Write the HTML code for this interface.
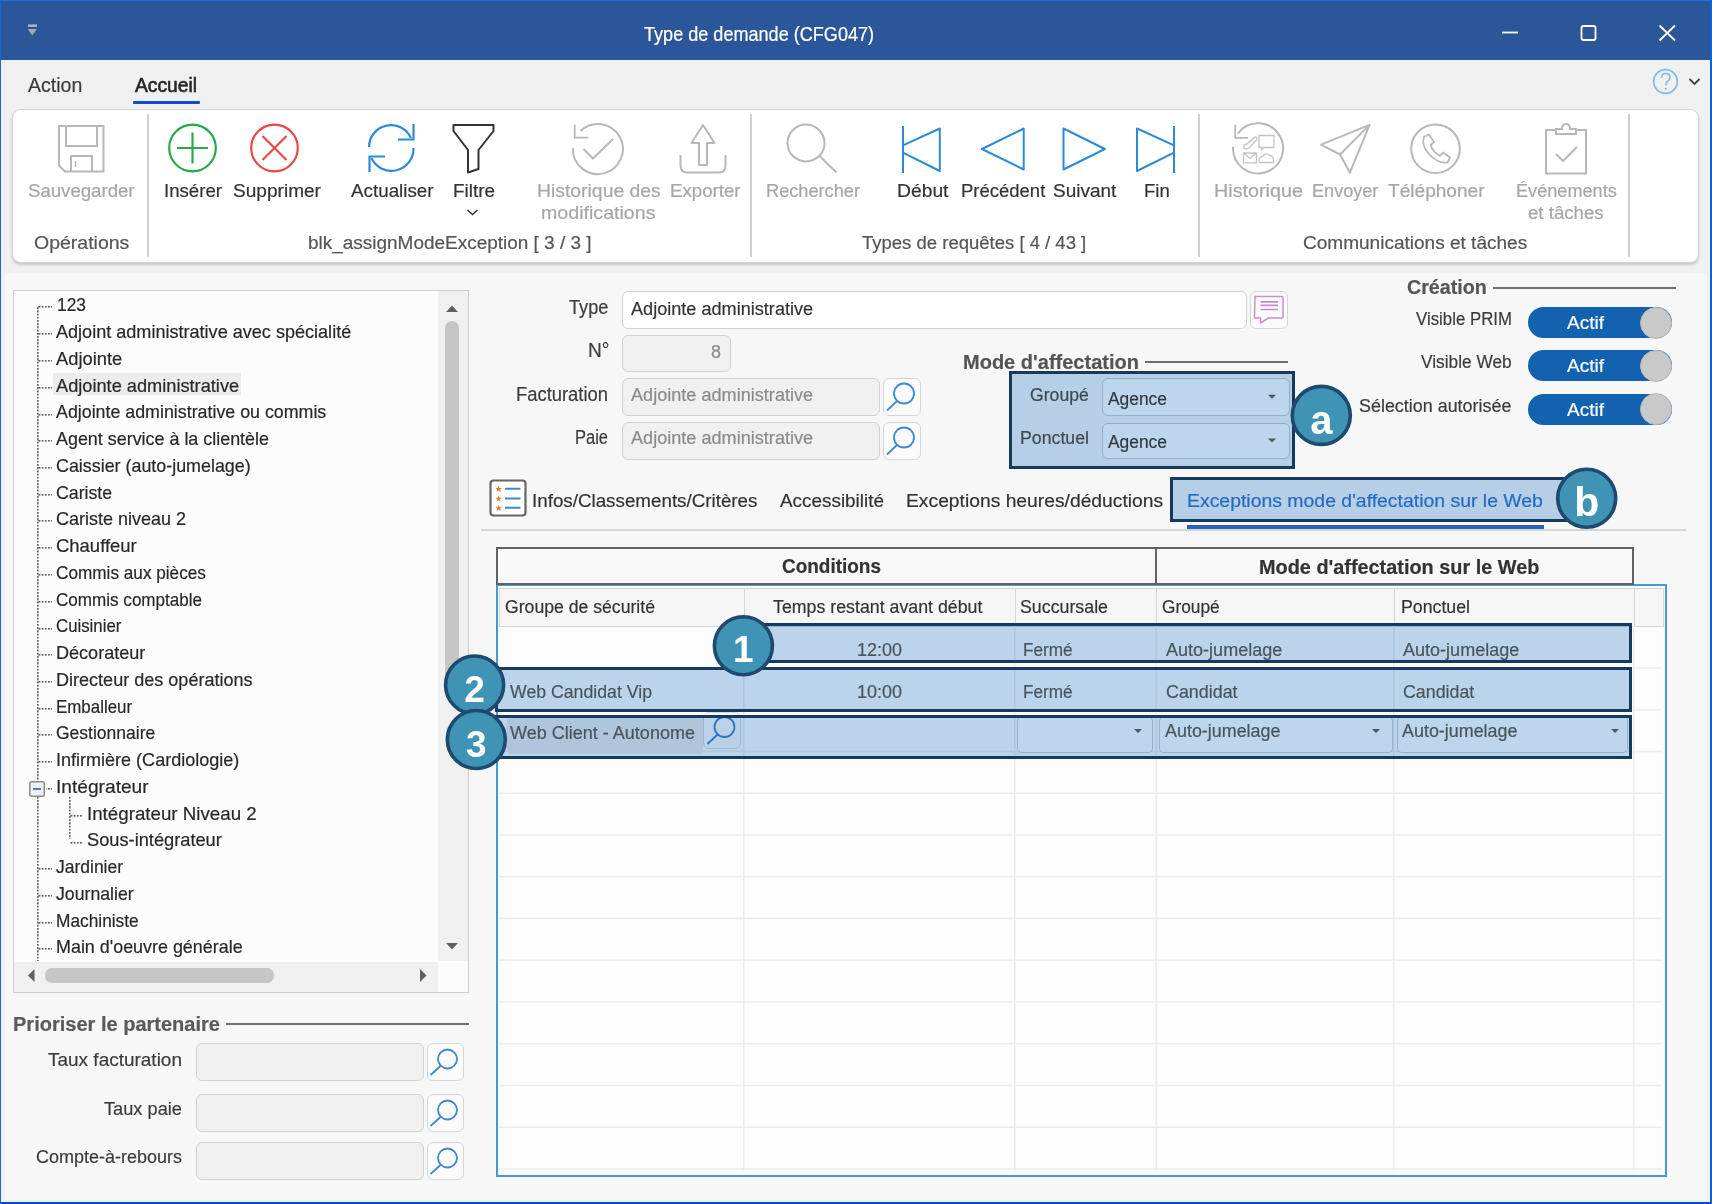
<!DOCTYPE html>
<html><head><meta charset="utf-8"><title>Type de demande (CFG047)</title>
<style>
html,body{margin:0;padding:0;}
body{width:1712px;height:1204px;position:relative;overflow:hidden;background:#f7f7f7;font-family:"Liberation Sans", sans-serif;}
.t{position:absolute;white-space:pre;line-height:1;transform-origin:0 0;-webkit-text-stroke:0.2px currentColor;}
.b{position:absolute;box-sizing:border-box;}
svg.ov{position:absolute;left:0;top:0;}
</style></head><body>
<div class="b" style="left:0px;top:0px;width:1712px;height:1204px;background:#f0f0f0;"></div>
<div class="b" style="left:5px;top:273px;width:1702px;height:926.5px;background:#f7f7f7;"></div>
<div class="b" style="left:0px;top:0px;width:1712px;height:60px;background:#2b579a;"></div>
<div class="b" style="left:0px;top:60px;width:1712px;height:213px;background:#f0f0f0;"></div>
<svg class="ov" width="1712" height="60" style="left:0;top:0"><rect x="28" y="24.5" width="9" height="2.3" fill="#b9b9b9"/><path d="M27.8 29 L36.8 29 L32.3 35.5 Z" fill="#a9a9a9"/><line x1="1502" y1="32.5" x2="1518" y2="32.5" stroke="#fff" stroke-width="1.8"/><rect x="1581.5" y="26" width="14" height="14" rx="2" fill="none" stroke="#fff" stroke-width="1.8"/><path d="M1659.5 25.5 L1675 40.5 M1675 25.5 L1659.5 40.5" stroke="#fff" stroke-width="1.8"/></svg>
<span class="t" style="left:643.70px;top:24.20px;font-size:20.20px;color:#ffffff;transform:scaleX(0.8955);">Type de demande (CFG047)</span>
<span class="t" style="left:28.00px;top:76.39px;font-size:19.62px;color:#3a3a3a;transform:scaleX(0.9957);">Action</span>
<span class="t" style="left:134.50px;top:76.39px;font-size:19.62px;color:#262626;transform:scaleX(0.9801);-webkit-text-stroke:0.6px #262626;">Accueil</span>
<div class="b" style="left:133px;top:101px;width:67px;height:3px;background:#0b50c8;border-radius:1px;"></div>
<svg class="ov" width="1712" height="110"><circle cx="1665.5" cy="81.5" r="11.8" fill="none" stroke="#7fbde6" stroke-width="1.8"/><path d="M1661.5 78 Q1661.5 73.5 1665.7 73.5 Q1670 73.5 1670 77.5 Q1670 80 1667.5 81.5 Q1665.8 82.5 1665.8 85.5" fill="none" stroke="#7fbde6" stroke-width="1.7"/><circle cx="1665.8" cy="88.8" r="1.1" fill="#7fbde6"/><path d="M1689.5 79 L1694.5 84 L1699.5 79" fill="none" stroke="#444" stroke-width="1.8"/></svg>
<div class="b" style="left:12px;top:109px;width:1687px;height:154px;background:#fff;border:1px solid #d6d6d6;border-radius:9px;box-shadow:0 2px 3px rgba(0,0,0,0.18);"></div>
<div class="b" style="left:146.5px;top:114px;width:2.0px;height:143px;background:#d0d0d0;"></div>
<div class="b" style="left:749.5px;top:114px;width:2.0px;height:143px;background:#d0d0d0;"></div>
<div class="b" style="left:1198px;top:114px;width:2px;height:143px;background:#d0d0d0;"></div>
<div class="b" style="left:1628px;top:114px;width:2px;height:143px;background:#d0d0d0;"></div>
<span class="t" style="left:28.00px;top:182.01px;font-size:18.90px;color:#a6a6a6;transform:scaleX(0.9852);">Sauvegarder</span>
<span class="t" style="left:33.60px;top:234.01px;font-size:18.90px;color:#555555;transform:scaleX(1.0321);">Opérations</span>
<span class="t" style="left:163.50px;top:182.01px;font-size:18.90px;color:#333333;transform:scaleX(0.9862);">Insérer</span>
<span class="t" style="left:232.70px;top:182.01px;font-size:18.90px;color:#333333;transform:scaleX(1.0096);">Supprimer</span>
<span class="t" style="left:351.00px;top:182.01px;font-size:18.90px;color:#333333;transform:scaleX(0.9956);">Actualiser</span>
<span class="t" style="left:453.00px;top:182.01px;font-size:18.90px;color:#333333;">Filtre</span>
<span class="t" style="left:536.70px;top:182.01px;font-size:18.90px;color:#a6a6a6;transform:scaleX(1.0250);">Historique des</span>
<span class="t" style="left:540.50px;top:204.01px;font-size:18.90px;color:#a6a6a6;transform:scaleX(1.0383);">modifications</span>
<span class="t" style="left:669.60px;top:182.01px;font-size:18.90px;color:#a6a6a6;transform:scaleX(0.9886);">Exporter</span>
<span class="t" style="left:308.40px;top:234.01px;font-size:18.90px;color:#555555;transform:scaleX(1.0037);">blk_assignModeException [ 3 / 3 ]</span>
<span class="t" style="left:766.00px;top:182.01px;font-size:18.90px;color:#a6a6a6;transform:scaleX(0.9624);">Rechercher</span>
<span class="t" style="left:896.50px;top:182.01px;font-size:18.90px;color:#333333;transform:scaleX(1.0213);">Début</span>
<span class="t" style="left:961.40px;top:182.01px;font-size:18.90px;color:#333333;transform:scaleX(0.9787);">Précédent</span>
<span class="t" style="left:1053.00px;top:182.01px;font-size:18.90px;color:#333333;transform:scaleX(1.0044);">Suivant</span>
<span class="t" style="left:1143.60px;top:182.01px;font-size:18.90px;color:#333333;transform:scaleX(0.9829);">Fin</span>
<span class="t" style="left:862.40px;top:234.01px;font-size:18.90px;color:#555555;transform:scaleX(0.9795);">Types de requêtes [ 4 / 43 ]</span>
<span class="t" style="left:1213.80px;top:182.01px;font-size:18.90px;color:#a6a6a6;transform:scaleX(1.0462);">Historique</span>
<span class="t" style="left:1312.00px;top:182.01px;font-size:18.90px;color:#a6a6a6;transform:scaleX(0.9579);">Envoyer</span>
<span class="t" style="left:1387.60px;top:182.01px;font-size:18.90px;color:#a6a6a6;transform:scaleX(1.0105);">Téléphoner</span>
<span class="t" style="left:1516.00px;top:182.01px;font-size:18.90px;color:#a6a6a6;transform:scaleX(0.9597);">Événements</span>
<span class="t" style="left:1528.40px;top:204.01px;font-size:18.90px;color:#a6a6a6;transform:scaleX(0.9859);">et tâches</span>
<span class="t" style="left:1302.80px;top:234.01px;font-size:18.90px;color:#555555;transform:scaleX(1.0070);">Communications et tâches</span>
<svg class="ov" width="1712" height="270"><path d="M59 126 H103.5 V171.5 H65 L59 165.5 Z" fill="none" stroke="#b8b8b8" stroke-width="2"/><path d="M66 126 V146 H97 V126" fill="none" stroke="#b8b8b8" stroke-width="2"/><path d="M71 171.5 V156 H92 V171.5" fill="none" stroke="#b8b8b8" stroke-width="2"/><line x1="75.5" y1="161" x2="75.5" y2="167" stroke="#b8b8b8" stroke-width="1.5"/><circle cx="192.5" cy="148" r="23.3" fill="none" stroke="#2aa84c" stroke-width="2.2"/><path d="M177 148 H208 M192.5 132.5 V163.5" stroke="#2aa84c" stroke-width="2.2"/><circle cx="274.5" cy="148" r="23.3" fill="none" stroke="#e84848" stroke-width="2.2"/><path d="M262.5 136 L286.5 160 M286.5 136 L262.5 160" stroke="#e84848" stroke-width="2.2"/><path d="M369 147 A22 22 0 0 1 411 138" fill="none" stroke="#2b8bd5" stroke-width="2.2"/><path d="M413.5 124 V139.5 H398" fill="none" stroke="#2b8bd5" stroke-width="2.2"/><path d="M413.5 148 A22 22 0 0 1 371.5 158" fill="none" stroke="#2b8bd5" stroke-width="2.2"/><path d="M369.5 172 V156.5 H385" fill="none" stroke="#2b8bd5" stroke-width="2.2"/><path d="M453.5 125 H493.5 V131 L478.5 150 V169 L468 172.5 V150 L453.5 131 Z" fill="none" stroke="#333" stroke-width="2" stroke-linejoin="round"/><path d="M467.5 210 L472.5 214.5 L477.5 210" fill="none" stroke="#333" stroke-width="1.6"/><path d="M580.4 131.2 A25 25 0 1 1 572.9 148.1" fill="none" stroke="#b8b8b8" stroke-width="2"/><path d="M574.7 124.7 V137.6 H588.3" fill="none" stroke="#b8b8b8" stroke-width="1.8"/><path d="M583.5 149 L593 158.5 L613 139" fill="none" stroke="#b8b8b8" stroke-width="2"/><path d="M703 125 L691.5 143 H699 V165 H707 V143 H714.5 Z" fill="none" stroke="#b8b8b8" stroke-width="2" stroke-linejoin="round"/><path d="M680.5 155 V165.5 Q680.5 172.5 687.5 172.5 H718.5 Q725.5 172.5 725.5 165.5 V155" fill="none" stroke="#b8b8b8" stroke-width="2"/><circle cx="806" cy="143" r="18.5" fill="none" stroke="#b8b8b8" stroke-width="2"/><line x1="819.5" y1="156" x2="836.5" y2="172.5" stroke="#b8b8b8" stroke-width="2"/><line x1="903" y1="126" x2="903" y2="173" stroke="#2b8bd5" stroke-width="2"/><path d="M903.5 145.2 L939.8 128.5 V171 L903.5 152.8" fill="none" stroke="#2b8bd5" stroke-width="2" stroke-linejoin="round"/><path d="M981.9 149 L1023.7 128.5 V169.5 Z" fill="none" stroke="#2b8bd5" stroke-width="2" stroke-linejoin="round"/><path d="M1063.5 128.5 L1104.9 149 L1063.5 169.5 Z" fill="none" stroke="#2b8bd5" stroke-width="2" stroke-linejoin="round"/><path d="M1173.5 145.2 L1137 128.5 V171 L1173.5 152.8" fill="none" stroke="#2b8bd5" stroke-width="2" stroke-linejoin="round"/><line x1="1174" y1="126" x2="1174" y2="173" stroke="#2b8bd5" stroke-width="2"/><path d="M1238 133.4 A25 25 0 1 1 1233.1 146.7" fill="none" stroke="#b8b8b8" stroke-width="2"/><path d="M1235.2 124.8 V137.8 H1248" fill="none" stroke="#b8b8b8" stroke-width="1.8"/><path d="M1259 135.5 H1274 V147.5 H1264 L1262 150 V147.5 H1259 Z" fill="none" stroke="#c4c4c4" stroke-width="1.3"/><path d="M1244 148 Q1243 144 1247 144 L1255 137 Q1258 137 1256.5 140 L1249 148 Q1246 150 1244 148 Z" fill="none" stroke="#c4c4c4" stroke-width="1.3"/><path d="M1243.5 153 H1256.5 V162.8 H1243.5 Z M1243.5 153 L1250 158.5 L1256.5 153" fill="none" stroke="#c4c4c4" stroke-width="1.3"/><path d="M1259.5 162.5 Q1258 157 1262.5 156.5 Q1265 152 1269.5 155.5 Q1274 155.5 1273.5 162.5 Z" fill="none" stroke="#c4c4c4" stroke-width="1.3"/><path d="M1369.6 124.9 L1321 144.6 L1340 154.5 L1349.9 172.7 Z M1340 154.5 L1369.6 124.9" fill="none" stroke="#b8b8b8" stroke-width="2" stroke-linejoin="round"/><circle cx="1435.5" cy="148.7" r="24.3" fill="none" stroke="#b8b8b8" stroke-width="2"/><path d="M1424 137 L1429 134.5 L1434 142 L1430.5 145 Q1433 152 1440 156 L1443 152.5 L1450 157.5 L1447.5 162.5 Q1438 164 1429 154 Q1421 145 1424 137 Z" fill="none" stroke="#b8b8b8" stroke-width="1.8" stroke-linejoin="round"/><path d="M1556 130 H1546 V173.5 H1586 V130 H1576" fill="none" stroke="#b8b8b8" stroke-width="2"/><path d="M1556 134 V129 H1562 Q1562 124 1566 124 Q1570 124 1570 129 H1576 V134 Z" fill="none" stroke="#b8b8b8" stroke-width="2"/><path d="M1556 154 L1563 161 L1577 147" fill="none" stroke="#b8b8b8" stroke-width="2"/></svg>
<div class="b" style="left:13px;top:290px;width:456px;height:703px;background:#fcfcfc;border:1.5px solid #cdcdcd;"></div>
<div class="b" style="left:53px;top:373px;width:188px;height:22px;background:#ececec;"></div>
<span class="t" style="left:57.30px;top:296.25px;font-size:18.60px;color:#282828;transform:scaleX(0.9342);">123</span>
<span class="t" style="left:55.80px;top:323.00px;font-size:18.60px;color:#282828;transform:scaleX(0.9716);">Adjoint administrative avec spécialité</span>
<span class="t" style="left:55.80px;top:349.75px;font-size:18.60px;color:#282828;transform:scaleX(0.9861);">Adjointe</span>
<span class="t" style="left:55.80px;top:376.50px;font-size:18.60px;color:#282828;transform:scaleX(0.9788);">Adjointe administrative</span>
<span class="t" style="left:55.80px;top:403.25px;font-size:18.60px;color:#282828;transform:scaleX(0.9579);">Adjointe administrative ou commis</span>
<span class="t" style="left:55.80px;top:430.00px;font-size:18.60px;color:#282828;transform:scaleX(0.9629);">Agent service à la clientèle</span>
<span class="t" style="left:55.80px;top:456.75px;font-size:18.60px;color:#282828;transform:scaleX(0.9612);">Caissier (auto-jumelage)</span>
<span class="t" style="left:55.80px;top:483.50px;font-size:18.60px;color:#282828;transform:scaleX(0.9520);">Cariste</span>
<span class="t" style="left:55.80px;top:510.25px;font-size:18.60px;color:#282828;transform:scaleX(0.9685);">Cariste niveau 2</span>
<span class="t" style="left:55.80px;top:537.00px;font-size:18.60px;color:#282828;transform:scaleX(0.9930);">Chauffeur</span>
<span class="t" style="left:55.80px;top:563.75px;font-size:18.60px;color:#282828;transform:scaleX(0.9241);">Commis aux pièces</span>
<span class="t" style="left:55.80px;top:590.50px;font-size:18.60px;color:#282828;transform:scaleX(0.9182);">Commis comptable</span>
<span class="t" style="left:55.80px;top:617.25px;font-size:18.60px;color:#282828;transform:scaleX(0.9036);">Cuisinier</span>
<span class="t" style="left:55.80px;top:644.00px;font-size:18.60px;color:#282828;transform:scaleX(0.9714);">Décorateur</span>
<span class="t" style="left:55.80px;top:670.75px;font-size:18.60px;color:#282828;transform:scaleX(0.9705);">Directeur des opérations</span>
<span class="t" style="left:55.80px;top:697.50px;font-size:18.60px;color:#282828;transform:scaleX(0.9086);">Emballeur</span>
<span class="t" style="left:55.80px;top:724.25px;font-size:18.60px;color:#282828;transform:scaleX(0.9413);">Gestionnaire</span>
<span class="t" style="left:55.80px;top:751.00px;font-size:18.60px;color:#282828;transform:scaleX(0.9693);">Infirmière (Cardiologie)</span>
<span class="t" style="left:55.80px;top:777.75px;font-size:18.60px;color:#282828;transform:scaleX(1.0302);">Intégrateur</span>
<span class="t" style="left:87.00px;top:804.50px;font-size:18.60px;color:#282828;transform:scaleX(1.0072);">Intégrateur Niveau 2</span>
<span class="t" style="left:87.00px;top:831.25px;font-size:18.60px;color:#282828;transform:scaleX(0.9808);">Sous-intégrateur</span>
<span class="t" style="left:55.80px;top:858.00px;font-size:18.60px;color:#282828;transform:scaleX(0.9404);">Jardinier</span>
<span class="t" style="left:55.80px;top:884.75px;font-size:18.60px;color:#282828;transform:scaleX(0.9511);">Journalier</span>
<span class="t" style="left:55.80px;top:911.50px;font-size:18.60px;color:#282828;transform:scaleX(0.9300);">Machiniste</span>
<span class="t" style="left:55.80px;top:938.25px;font-size:18.60px;color:#282828;transform:scaleX(0.9631);">Main d'oeuvre générale</span>
<svg class="ov" width="470" height="1000"><defs><pattern id="dh" width="3.2" height="3.2" patternUnits="userSpaceOnUse"><rect width="1.9" height="3.2" fill="#5e5e5e"/></pattern><pattern id="dv" width="3.2" height="3.2" patternUnits="userSpaceOnUse"><rect width="3.2" height="1.9" fill="#5e5e5e"/></pattern></defs><rect x="38" y="306" width="14" height="1.6" fill="url(#dh)"/><rect x="38" y="333" width="14" height="1.6" fill="url(#dh)"/><rect x="38" y="360" width="14" height="1.6" fill="url(#dh)"/><rect x="38" y="387" width="14" height="1.6" fill="url(#dh)"/><rect x="38" y="414" width="14" height="1.6" fill="url(#dh)"/><rect x="38" y="440" width="14" height="1.6" fill="url(#dh)"/><rect x="38" y="467" width="14" height="1.6" fill="url(#dh)"/><rect x="38" y="494" width="14" height="1.6" fill="url(#dh)"/><rect x="38" y="520" width="14" height="1.6" fill="url(#dh)"/><rect x="38" y="547" width="14" height="1.6" fill="url(#dh)"/><rect x="38" y="574" width="14" height="1.6" fill="url(#dh)"/><rect x="38" y="601" width="14" height="1.6" fill="url(#dh)"/><rect x="38" y="628" width="14" height="1.6" fill="url(#dh)"/><rect x="38" y="654" width="14" height="1.6" fill="url(#dh)"/><rect x="38" y="681" width="14" height="1.6" fill="url(#dh)"/><rect x="38" y="708" width="14" height="1.6" fill="url(#dh)"/><rect x="38" y="734" width="14" height="1.6" fill="url(#dh)"/><rect x="38" y="761" width="14" height="1.6" fill="url(#dh)"/><rect x="46" y="788" width="6" height="1.6" fill="url(#dh)"/><rect x="70" y="815" width="13" height="1.6" fill="url(#dh)"/><rect x="70" y="842" width="13" height="1.6" fill="url(#dh)"/><rect x="38" y="868" width="14" height="1.6" fill="url(#dh)"/><rect x="38" y="895" width="14" height="1.6" fill="url(#dh)"/><rect x="38" y="922" width="14" height="1.6" fill="url(#dh)"/><rect x="38" y="948" width="14" height="1.6" fill="url(#dh)"/><rect x="37" y="306" width="1.6" height="655" fill="url(#dv)"/><rect x="69" y="797" width="1.6" height="42" fill="url(#dv)"/><rect x="29.8" y="781.8" width="14.5" height="14.5" rx="2" fill="#f0f0f0" stroke="#8a8a8a" stroke-width="1.5"/><line x1="33" y1="789" x2="41" y2="789" stroke="#3355aa" stroke-width="1.6"/></svg>
<div class="b" style="left:438px;top:291px;width:30px;height:670px;background:#f0f0f0;"></div>
<div class="b" style="left:445px;top:321px;width:14px;height:379px;background:#c6c6c6;border-radius:7px;"></div>
<div class="b" style="left:14px;top:962px;width:424px;height:30px;background:#f0f0f0;"></div>
<div class="b" style="left:45px;top:968px;width:229px;height:15px;background:#c6c6c6;border-radius:7px;"></div>
<svg class="ov" width="470" height="1000"><path d="M446 312 L452 305.5 L458 312 Z" fill="#606060"/><path d="M446 943 L452 949.5 L458 943 Z" fill="#606060"/><path d="M34.5 969 L28 975.5 L34.5 982 Z" fill="#606060"/><path d="M420 969 L426.5 975.5 L420 982 Z" fill="#606060"/></svg>
<span class="t" style="left:13.00px;top:1014.37px;font-size:20.35px;color:#5a5a5a;font-weight:bold;transform:scaleX(0.9840);">Prioriser le partenaire</span>
<div class="b" style="left:226px;top:1022.5px;width:243px;height:2.0px;background:#6e6e6e;"></div>
<span class="t" style="left:48.00px;top:1050.71px;font-size:18.90px;color:#3c3c3c;transform:scaleX(1.0045);">Taux facturation</span>
<div class="b" style="left:196px;top:1043px;width:228px;height:38px;background:#f0f0f0;border:1.6px solid #d2d2d2;border-radius:6px;"></div>
<div class="b" style="left:427px;top:1043px;width:37px;height:38px;background:#fbfbfb;border:1.6px solid #d6d6d6;border-radius:6px;"></div>
<span class="t" style="left:104.00px;top:1099.81px;font-size:18.90px;color:#3c3c3c;transform:scaleX(0.9643);">Taux paie</span>
<div class="b" style="left:196px;top:1094px;width:228px;height:38px;background:#f0f0f0;border:1.6px solid #d2d2d2;border-radius:6px;"></div>
<div class="b" style="left:427px;top:1094px;width:37px;height:38px;background:#fbfbfb;border:1.6px solid #d6d6d6;border-radius:6px;"></div>
<span class="t" style="left:36.00px;top:1148.31px;font-size:18.90px;color:#3c3c3c;transform:scaleX(0.9522);">Compte-à-rebours</span>
<div class="b" style="left:196px;top:1142px;width:228px;height:38px;background:#f0f0f0;border:1.6px solid #d2d2d2;border-radius:6px;"></div>
<div class="b" style="left:427px;top:1142px;width:37px;height:38px;background:#fbfbfb;border:1.6px solid #d6d6d6;border-radius:6px;"></div>
<svg class="ov" width="470" height="1204"><circle cx="447.5" cy="1059" r="9.5" fill="none" stroke="#3d8ad0" stroke-width="1.8"/><line x1="440.5" y1="1066" x2="430.5" y2="1075" stroke="#3d8ad0" stroke-width="1.8"/><circle cx="447.5" cy="1110" r="9.5" fill="none" stroke="#3d8ad0" stroke-width="1.8"/><line x1="440.5" y1="1117" x2="430.5" y2="1126" stroke="#3d8ad0" stroke-width="1.8"/><circle cx="447.5" cy="1158" r="9.5" fill="none" stroke="#3d8ad0" stroke-width="1.8"/><line x1="440.5" y1="1165" x2="430.5" y2="1174" stroke="#3d8ad0" stroke-width="1.8"/></svg>
<span class="t" style="left:569.00px;top:297.77px;font-size:19.77px;color:#3c3c3c;transform:scaleX(0.9194);">Type</span>
<span class="t" style="left:588.00px;top:341.27px;font-size:19.77px;color:#3c3c3c;transform:scaleX(0.9692);">N°</span>
<span class="t" style="left:516.40px;top:384.77px;font-size:19.77px;color:#3c3c3c;transform:scaleX(0.9304);">Facturation</span>
<span class="t" style="left:575.40px;top:427.77px;font-size:19.77px;color:#3c3c3c;transform:scaleX(0.8341);">Paie</span>
<div class="b" style="left:622px;top:291px;width:625px;height:38px;background:#ffffff;border:1.6px solid #d2d2d2;border-radius:6px;"></div>
<span class="t" style="left:631.40px;top:299.91px;font-size:18.90px;color:#333333;transform:scaleX(0.9584);">Adjointe administrative</span>
<div class="b" style="left:1250px;top:291px;width:38px;height:38px;background:#fbfbfb;border:1.6px solid #d6d6d6;border-radius:6px;"></div>
<svg class="ov" width="1712" height="600"><path d="M1255 296.5 H1282 Q1283 296.5 1283 297.5 V317 Q1283 318 1282 318 H1268.5 L1260.5 323 V318 H1255 Q1254.5 318 1254.5 317.5 Z" fill="none" stroke="#cc8fcc" stroke-width="1.5" stroke-linejoin="round"/><path d="M1260.5 301.9 H1278 M1260.5 305.3 H1278 M1260.5 309.5 H1278" stroke="#c98ac9" stroke-width="1.7"/></svg>
<div class="b" style="left:622px;top:335px;width:109px;height:37px;background:#f0f0f0;border:1.6px solid #d2d2d2;border-radius:6px;"></div>
<span class="t" style="left:710.50px;top:342.51px;font-size:18.90px;color:#8a8a8a;transform:scaleX(0.9514);">8</span>
<div class="b" style="left:622px;top:378px;width:258px;height:38px;background:#f0f0f0;border:1.6px solid #d2d2d2;border-radius:6px;"></div>
<span class="t" style="left:631.40px;top:386.21px;font-size:18.90px;color:#8a8a8a;transform:scaleX(0.9584);">Adjointe administrative</span>
<div class="b" style="left:883px;top:378px;width:38px;height:38px;background:#fbfbfb;border:1.6px solid #d6d6d6;border-radius:6px;"></div>
<div class="b" style="left:622px;top:422px;width:258px;height:38px;background:#f0f0f0;border:1.6px solid #d2d2d2;border-radius:6px;"></div>
<span class="t" style="left:631.40px;top:429.41px;font-size:18.90px;color:#8a8a8a;transform:scaleX(0.9584);">Adjointe administrative</span>
<div class="b" style="left:883px;top:422px;width:38px;height:38px;background:#fbfbfb;border:1.6px solid #d6d6d6;border-radius:6px;"></div>
<svg class="ov" width="1712" height="600"><circle cx="904" cy="393.5" r="10" fill="none" stroke="#3d8ad0" stroke-width="1.8"/><line x1="897" y1="401" x2="887" y2="410.5" stroke="#3d8ad0" stroke-width="1.8"/><circle cx="904" cy="437.5" r="10" fill="none" stroke="#3d8ad0" stroke-width="1.8"/><line x1="897" y1="445" x2="887" y2="454.5" stroke="#3d8ad0" stroke-width="1.8"/></svg>
<span class="t" style="left:962.50px;top:352.07px;font-size:20.35px;color:#555555;font-weight:bold;transform:scaleX(0.9836);">Mode d'affectation</span>
<div class="b" style="left:1145px;top:360.5px;width:143px;height:2.0px;background:#6e6e6e;"></div>
<span class="t" style="left:1030.00px;top:385.71px;font-size:18.90px;color:#555555;transform:scaleX(0.9330);">Groupé</span>
<span class="t" style="left:1019.80px;top:428.61px;font-size:18.90px;color:#555555;transform:scaleX(0.9383);">Ponctuel</span>
<div class="b" style="left:1101.5px;top:378px;width:188.0px;height:37.5px;background:#ffffff;border:1.6px solid #c8d0d8;border-radius:6px;"></div>
<span class="t" style="left:1107.70px;top:390.31px;font-size:18.90px;color:#444444;transform:scaleX(0.9206);">Agence</span>
<svg class="ov" width="1712" height="600"><path d="M1268 394.8 L1276 394.8 L1272 398.8 Z" fill="#666"/></svg>
<div class="b" style="left:1101.5px;top:422.5px;width:188.0px;height:36.0px;background:#ffffff;border:1.6px solid #c8d0d8;border-radius:6px;"></div>
<span class="t" style="left:1107.70px;top:433.01px;font-size:18.90px;color:#444444;transform:scaleX(0.9206);">Agence</span>
<svg class="ov" width="1712" height="600"><path d="M1268 438.5 L1276 438.5 L1272 442.5 Z" fill="#666"/></svg>
<span class="t" style="left:1406.60px;top:277.27px;font-size:20.35px;color:#555555;font-weight:bold;transform:scaleX(0.9668);">Création</span>
<div class="b" style="left:1493px;top:287px;width:183px;height:2px;background:#6e6e6e;"></div>
<span class="t" style="left:1415.70px;top:310.01px;font-size:18.90px;color:#3c3c3c;transform:scaleX(0.8905);">Visible PRIM</span>
<div class="b" style="left:1527.5px;top:307px;width:144.0px;height:31px;background:#1262b0;border-radius:16px;"></div>
<div class="b" style="left:1639.5px;top:306.5px;width:32px;height:32px;border-radius:50%;background:#c9c9c9;border:1px solid #b8b8b8;"></div>
<span class="t" style="left:1566.70px;top:314.01px;font-size:18.90px;color:#ffffff;transform:scaleX(1.0068);">Actif</span>
<span class="t" style="left:1421.00px;top:353.31px;font-size:18.90px;color:#3c3c3c;transform:scaleX(0.9154);">Visible Web</span>
<div class="b" style="left:1527.5px;top:350px;width:144.0px;height:31px;background:#1262b0;border-radius:16px;"></div>
<div class="b" style="left:1639.5px;top:349.5px;width:32px;height:32px;border-radius:50%;background:#c9c9c9;border:1px solid #b8b8b8;"></div>
<span class="t" style="left:1566.70px;top:357.01px;font-size:18.90px;color:#ffffff;transform:scaleX(1.0068);">Actif</span>
<span class="t" style="left:1359.30px;top:397.01px;font-size:18.90px;color:#3c3c3c;transform:scaleX(0.9483);">Sélection autorisée</span>
<div class="b" style="left:1527.5px;top:394px;width:144.0px;height:30.5px;background:#1262b0;border-radius:16px;"></div>
<div class="b" style="left:1639.5px;top:393.2px;width:32px;height:32px;border-radius:50%;background:#c9c9c9;border:1px solid #b8b8b8;"></div>
<span class="t" style="left:1566.70px;top:400.76px;font-size:18.90px;color:#ffffff;transform:scaleX(1.0068);">Actif</span>
<svg class="ov" width="1712" height="600"><rect x="490.5" y="480.5" width="35" height="35" rx="3" fill="#fff" stroke="#666" stroke-width="2.2"/><path d="M505 488.7 H520.5 M505 498.4 H520.5 M505 507.8 H520.5" stroke="#3d8ad0" stroke-width="2"/><path d="M498.7 485.7 L499.6 488.09999999999997 L502 488.09999999999997 L500.1 489.59999999999997 L500.8 491.9 L498.7 490.5 L496.6 491.9 L497.3 489.59999999999997 L495.4 488.09999999999997 L497.8 488.09999999999997 Z" fill="#e8792e"/><path d="M498.7 495.4 L499.6 497.79999999999995 L502 497.79999999999995 L500.1 499.29999999999995 L500.8 501.59999999999997 L498.7 500.2 L496.6 501.59999999999997 L497.3 499.29999999999995 L495.4 497.79999999999995 L497.8 497.79999999999995 Z" fill="#e8792e"/><path d="M498.7 504.8 L499.6 507.2 L502 507.2 L500.1 508.7 L500.8 511.0 L498.7 509.6 L496.6 511.0 L497.3 508.7 L495.4 507.2 L497.8 507.2 Z" fill="#e8792e"/></svg>
<span class="t" style="left:532.00px;top:492.01px;font-size:18.90px;color:#333333;transform:scaleX(0.9942);">Infos/Classements/Critères</span>
<span class="t" style="left:780.00px;top:492.01px;font-size:18.90px;color:#333333;">Accessibilité</span>
<span class="t" style="left:906.00px;top:492.01px;font-size:18.90px;color:#333333;transform:scaleX(1.0202);">Exceptions heures/déductions</span>
<span class="t" style="left:1187.00px;top:491.71px;font-size:18.90px;color:#2e7fd2;transform:scaleX(1.0278);">Exceptions mode d'affectation sur le Web</span>
<div class="b" style="left:1187px;top:525px;width:357px;height:4px;background:#2a5fb8;"></div>
<div class="b" style="left:481px;top:528.5px;width:1205px;height:2.0px;background:#d6d6d6;"></div>
<div class="b" style="left:496px;top:584px;width:1171px;height:593px;background:#fdfdfd;border:2px solid #4299d4;"></div>
<div class="b" style="left:496px;top:547px;width:661px;height:38px;background:#f8f8f8;border:2px solid #626262;"></div>
<div class="b" style="left:1155px;top:547px;width:479px;height:38px;background:#f8f8f8;border:2px solid #626262;"></div>
<span class="t" style="left:781.50px;top:557.39px;font-size:19.62px;color:#333333;font-weight:bold;transform:scaleX(0.9663);">Conditions</span>
<span class="t" style="left:1259.00px;top:557.99px;font-size:19.62px;color:#333333;font-weight:bold;transform:scaleX(1.0131);">Mode d'affectation sur le Web</span>
<div class="b" style="left:499px;top:588px;width:245.5px;height:38.5px;background:#f6f6f6;border:1.5px solid #d6d6d6;"></div>
<div class="b" style="left:743.5px;top:588px;width:272.0px;height:38.5px;background:#f6f6f6;border:1.5px solid #d6d6d6;"></div>
<div class="b" style="left:1014.5px;top:588px;width:142.5px;height:38.5px;background:#f6f6f6;border:1.5px solid #d6d6d6;"></div>
<div class="b" style="left:1156px;top:588px;width:238.5px;height:38.5px;background:#f6f6f6;border:1.5px solid #d6d6d6;"></div>
<div class="b" style="left:1393.5px;top:588px;width:241.0px;height:38.5px;background:#f6f6f6;border:1.5px solid #d6d6d6;"></div>
<div class="b" style="left:1633.5px;top:588px;width:30.5px;height:38.5px;background:#f6f6f6;border:1.5px solid #d6d6d6;"></div>
<span class="t" style="left:505.00px;top:598.01px;font-size:18.90px;color:#333333;transform:scaleX(0.9334);">Groupe de sécurité</span>
<span class="t" style="left:772.50px;top:598.01px;font-size:18.90px;color:#333333;transform:scaleX(0.9408);">Temps restant avant début</span>
<span class="t" style="left:1020.00px;top:598.01px;font-size:18.90px;color:#333333;transform:scaleX(0.9414);">Succursale</span>
<span class="t" style="left:1162.00px;top:598.01px;font-size:18.90px;color:#333333;transform:scaleX(0.9155);">Groupé</span>
<span class="t" style="left:1400.70px;top:598.01px;font-size:18.90px;color:#333333;transform:scaleX(0.9383);">Ponctuel</span>
<svg class="ov" width="1712" height="1204"><rect x="499" y="667.25" width="1163" height="1.5" fill="#ececec"/><rect x="499" y="709.00" width="1163" height="1.5" fill="#ececec"/><rect x="499" y="750.75" width="1163" height="1.5" fill="#ececec"/><rect x="499" y="792.50" width="1163" height="1.5" fill="#ececec"/><rect x="499" y="834.25" width="1163" height="1.5" fill="#ececec"/><rect x="499" y="876.00" width="1163" height="1.5" fill="#ececec"/><rect x="499" y="917.75" width="1163" height="1.5" fill="#ececec"/><rect x="499" y="959.50" width="1163" height="1.5" fill="#ececec"/><rect x="499" y="1001.25" width="1163" height="1.5" fill="#ececec"/><rect x="499" y="1043.00" width="1163" height="1.5" fill="#ececec"/><rect x="499" y="1084.75" width="1163" height="1.5" fill="#ececec"/><rect x="499" y="1126.50" width="1163" height="1.5" fill="#ececec"/><rect x="499" y="1168.25" width="1163" height="1.5" fill="#ececec"/><rect x="743.0" y="626" width="1.5" height="545" fill="#ececec"/><rect x="1014.0" y="626" width="1.5" height="545" fill="#ececec"/><rect x="1155.5" y="626" width="1.5" height="545" fill="#ececec"/><rect x="1393.0" y="626" width="1.5" height="545" fill="#ececec"/><rect x="1633.0" y="626" width="1.5" height="545" fill="#ececec"/></svg>
<span class="t" style="left:856.50px;top:641.01px;font-size:18.90px;color:#646464;transform:scaleX(0.9517);">12:00</span>
<span class="t" style="left:1023.00px;top:641.01px;font-size:18.90px;color:#646464;transform:scaleX(0.9104);">Fermé</span>
<span class="t" style="left:1165.60px;top:641.01px;font-size:18.90px;color:#646464;transform:scaleX(0.9545);">Auto-jumelage</span>
<span class="t" style="left:1403.20px;top:641.01px;font-size:18.90px;color:#646464;transform:scaleX(0.9545);">Auto-jumelage</span>
<span class="t" style="left:510.20px;top:682.51px;font-size:18.90px;color:#646464;transform:scaleX(0.9366);">Web Candidat Vip</span>
<span class="t" style="left:856.50px;top:682.51px;font-size:18.90px;color:#646464;transform:scaleX(0.9517);">10:00</span>
<span class="t" style="left:1023.00px;top:682.51px;font-size:18.90px;color:#646464;transform:scaleX(0.9104);">Fermé</span>
<span class="t" style="left:1165.60px;top:682.51px;font-size:18.90px;color:#646464;transform:scaleX(0.9466);">Candidat</span>
<span class="t" style="left:1403.20px;top:682.51px;font-size:18.90px;color:#646464;transform:scaleX(0.9427);">Candidat</span>
<div class="b" style="left:507px;top:717px;width:196px;height:37px;background:#ebebeb;border-radius:4px;"></div>
<span class="t" style="left:510.00px;top:724.41px;font-size:18.90px;color:#646464;transform:scaleX(0.9538);">Web Client - Autonome</span>
<div class="b" style="left:703px;top:712px;width:38px;height:37px;background:#fafafa;border:1px solid #d8d8d8;border-radius:6px;"></div>
<svg class="ov" width="1712" height="1204"><circle cx="724.5" cy="727" r="10" fill="none" stroke="#3d8ad0" stroke-width="1.8"/><line x1="717.5" y1="734.5" x2="707.5" y2="744" stroke="#3d8ad0" stroke-width="1.8"/><path d="M1134 729 L1142 729 L1138 733 Z" fill="#666"/><path d="M1372 729 L1380 729 L1376 733 Z" fill="#666"/><path d="M1611 729 L1619 729 L1615 733 Z" fill="#666"/></svg>
<div class="b" style="left:1017px;top:716px;width:136px;height:37px;background:#ffffff;border:1px solid #cdd3da;border-radius:5px;"></div>
<div class="b" style="left:1159px;top:716px;width:233.5px;height:37px;background:#ffffff;border:1px solid #cdd3da;border-radius:5px;"></div>
<div class="b" style="left:1397px;top:716px;width:231px;height:37px;background:#ffffff;border:1px solid #cdd3da;border-radius:5px;"></div>
<svg class="ov" width="1712" height="1204"><path d="M1134 729 L1142 729 L1138 733 Z" fill="#666"/><path d="M1372 729 L1380 729 L1376 733 Z" fill="#666"/><path d="M1611 729 L1619 729 L1615 733 Z" fill="#666"/></svg>
<span class="t" style="left:1164.50px;top:722.01px;font-size:18.90px;color:#646464;transform:scaleX(0.9479);">Auto-jumelage</span>
<span class="t" style="left:1401.80px;top:722.01px;font-size:18.90px;color:#646464;transform:scaleX(0.9479);">Auto-jumelage</span>
<div class="b" style="left:1009px;top:370.5px;width:286px;height:98.80000000000001px;background:#bdd6ee;mix-blend-mode:multiply;"></div>
<div class="b" style="left:1009px;top:370.5px;width:286px;height:98.80000000000001px;border:3px solid #163a5e;"></div>
<div class="b" style="left:1170px;top:477px;width:410px;height:45px;background:#bdd6ee;mix-blend-mode:multiply;"></div>
<div class="b" style="left:1170px;top:477px;width:410px;height:45px;border:3px solid #163a5e;"></div>
<div class="b" style="left:746px;top:623px;width:886px;height:39.5px;background:#bdd6ee;mix-blend-mode:multiply;"></div>
<div class="b" style="left:746px;top:623px;width:886px;height:39.5px;border:3px solid #163a5e;"></div>
<div class="b" style="left:495px;top:667px;width:1137px;height:44.5px;background:#bdd6ee;mix-blend-mode:multiply;"></div>
<div class="b" style="left:495px;top:667px;width:1137px;height:44.5px;border:3px solid #163a5e;"></div>
<div class="b" style="left:495px;top:715px;width:1137px;height:43.5px;background:#bdd6ee;mix-blend-mode:multiply;"></div>
<div class="b" style="left:495px;top:715px;width:1137px;height:43.5px;border:3px solid #163a5e;"></div>
<svg class="ov" width="1712" height="1204"><circle cx="1321.3" cy="415.4" r="29" fill="#3f93b5" stroke="#1d4a6e" stroke-width="3.6"/><text x="1321.3" y="433.59999999999997" text-anchor="middle" font-family="Liberation Sans" font-weight="bold" font-size="40" fill="#ffffff">a</text><circle cx="1586.7" cy="498.3" r="29" fill="#3f93b5" stroke="#1d4a6e" stroke-width="3.6"/><text x="1586.7" y="516.4" text-anchor="middle" font-family="Liberation Sans" font-weight="bold" font-size="41" fill="#ffffff">b</text><circle cx="743.4" cy="645.7" r="29" fill="#3f93b5" stroke="#1d4a6e" stroke-width="3.6"/><text x="743.4" y="661.9000000000001" text-anchor="middle" font-family="Liberation Sans" font-weight="bold" font-size="37" fill="#ffffff">1</text><circle cx="474.6" cy="685" r="29" fill="#3f93b5" stroke="#1d4a6e" stroke-width="3.6"/><text x="474.6" y="702.2" text-anchor="middle" font-family="Liberation Sans" font-weight="bold" font-size="37" fill="#ffffff">2</text><circle cx="476.3" cy="739.5" r="29" fill="#3f93b5" stroke="#1d4a6e" stroke-width="3.6"/><text x="476.3" y="756.8" text-anchor="middle" font-family="Liberation Sans" font-weight="bold" font-size="37" fill="#ffffff">3</text></svg>
<div class="b" style="left:0px;top:0px;width:1712px;height:1204px;border-left:1.6px solid #1569d2;border-right:2.5px solid #0b64d4;border-bottom:2px solid #0a4cc4;border-top:1px solid #1f70d8;"></div>
</body></html>
